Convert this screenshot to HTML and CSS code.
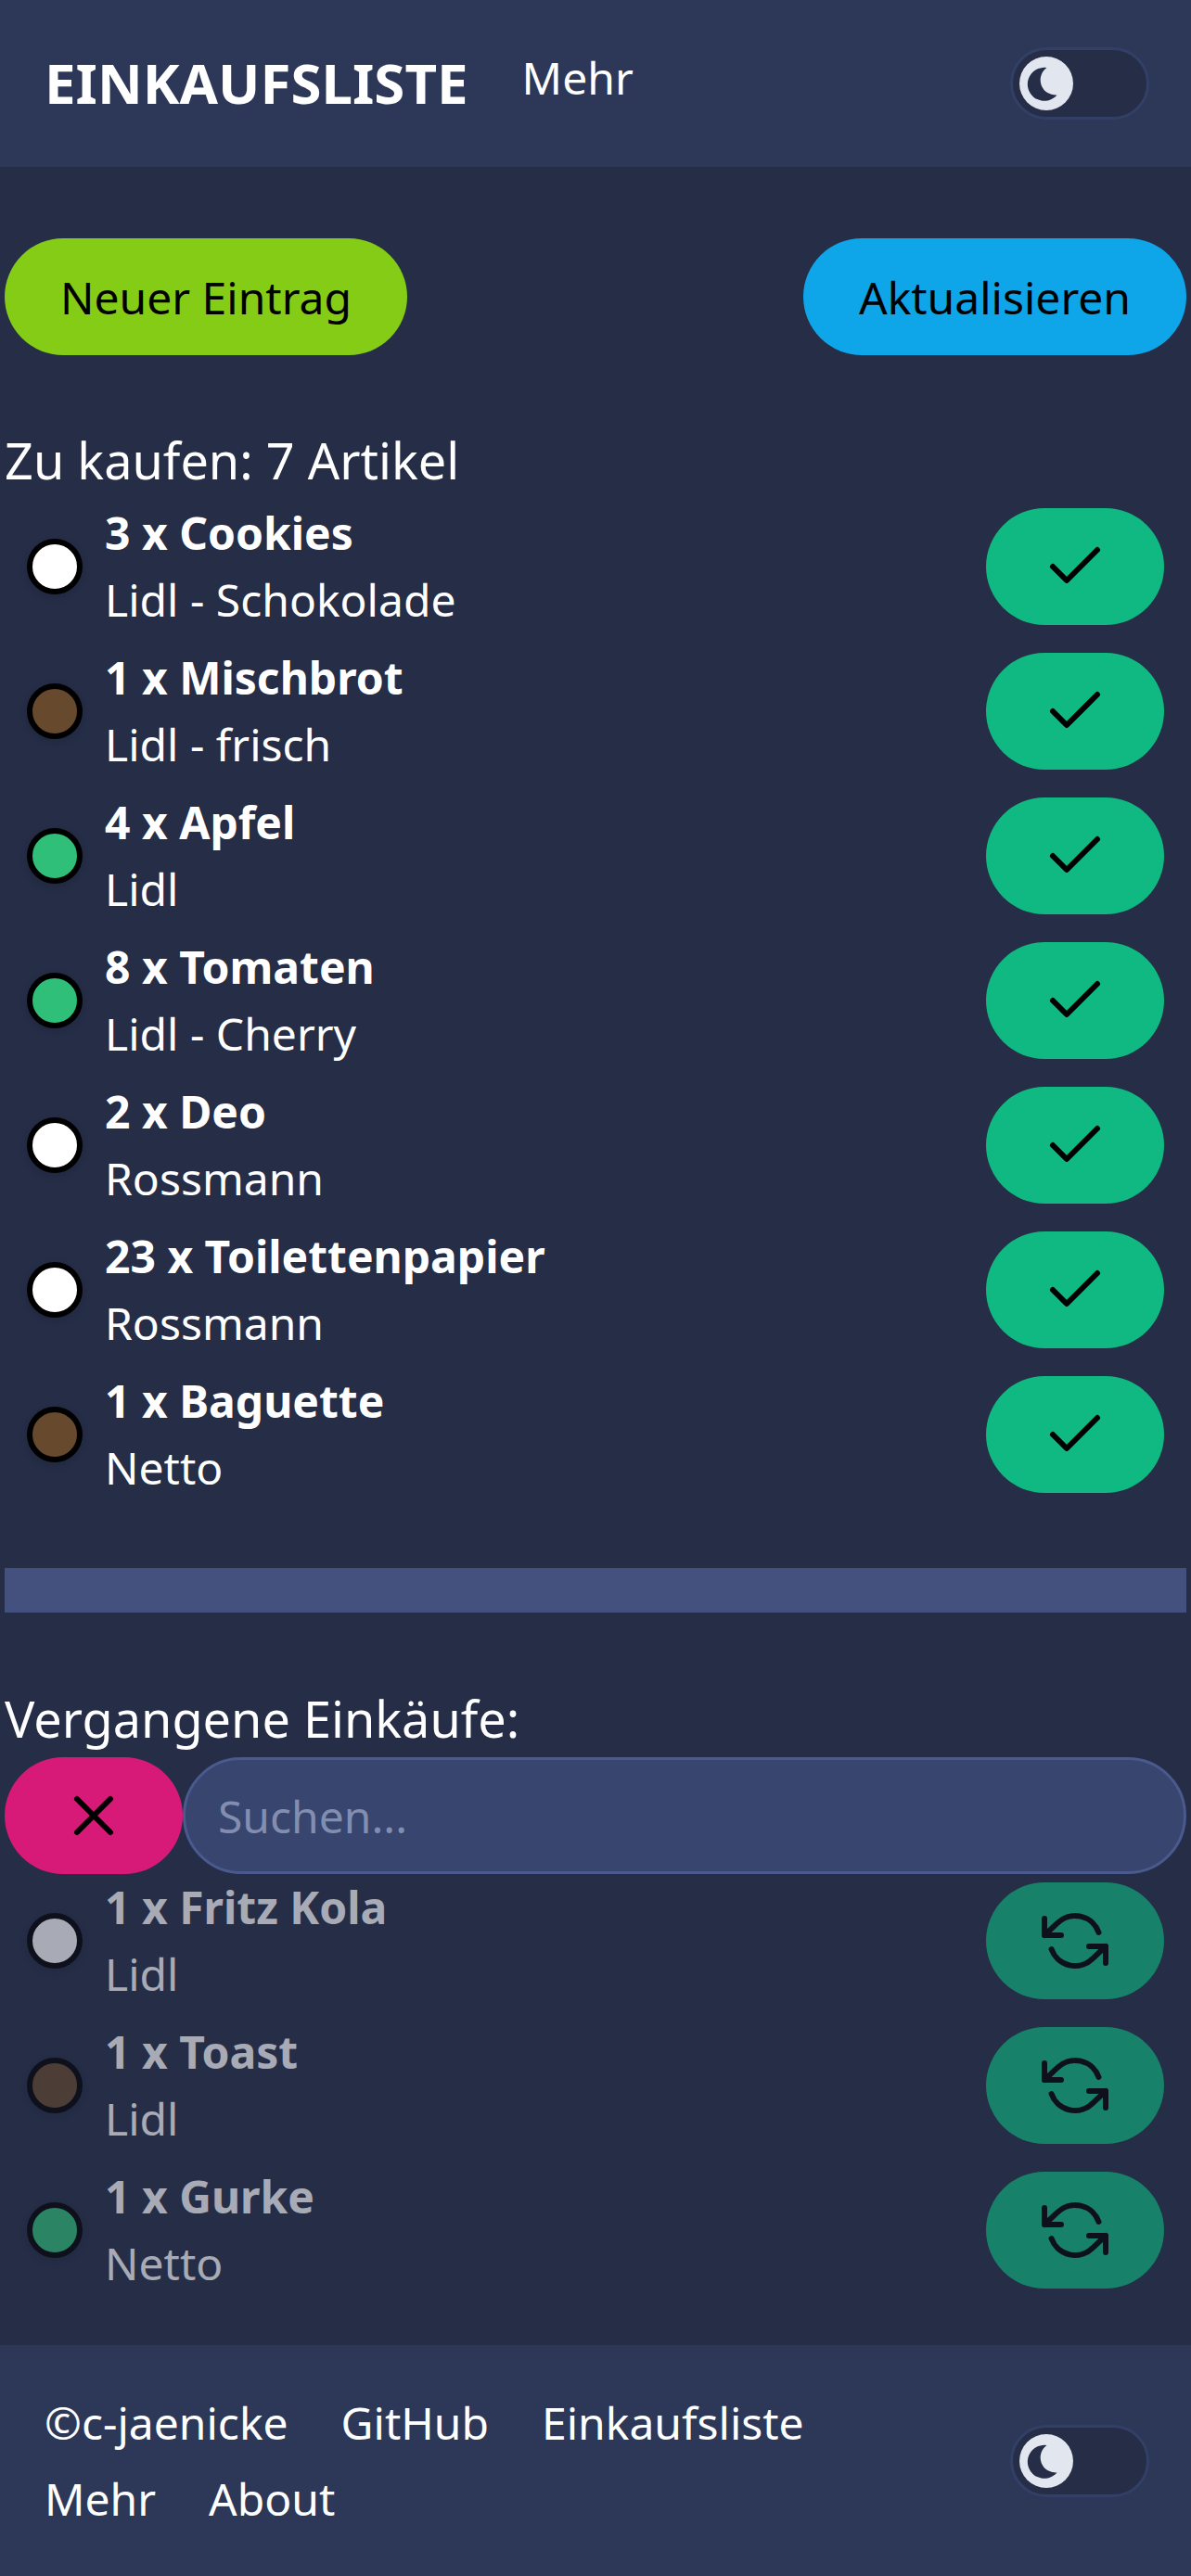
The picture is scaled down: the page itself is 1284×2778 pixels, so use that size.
FILE: index.html
```html
<!DOCTYPE html>
<html lang="de">
	<head>
		<title>Einkaufsliste</title>
		<link rel="stylesheet" href="styles.css">
	</head>
	<body>
		<header class="navbar">
			<a class="brand" href="#">EINKAUFSLISTE</a>
			<a class="nav-link" href="#">Mehr</a>
			<div class="toggle">
				<div class="knob">
					<svg viewBox="0 0 58 58"><path d="M29.5 12A18 18 0 1 0 40.5 41.5A16.3 16.3 0 0 1 29.5 12Z"/></svg>
				</div>
			</div>
		</header>
		<main class="content">
			<div class="actions">
				<button class="pill new">Neuer Eintrag</button>
				<button class="pill refresh">Aktualisieren</button>
			</div>
			<h2 class="heading open-heading">Zu kaufen: 7 Artikel</h2>
			<ul class="items">
				<li class="item">
					<span class="dot white"></span>
					<div class="text"><b>3 x Cookies</b><span>Lidl - Schokolade</span></div>
					<button class="pill icon-btn"><svg viewBox="0 0 24 24"><polyline points="20 6 9 17 4 12"/></svg></button>
				</li>
				<li class="item">
					<span class="dot brown"></span>
					<div class="text"><b>1 x Mischbrot</b><span>Lidl - frisch</span></div>
					<button class="pill icon-btn"><svg viewBox="0 0 24 24"><polyline points="20 6 9 17 4 12"/></svg></button>
				</li>
				<li class="item">
					<span class="dot green"></span>
					<div class="text"><b>4 x Apfel</b><span>Lidl</span></div>
					<button class="pill icon-btn"><svg viewBox="0 0 24 24"><polyline points="20 6 9 17 4 12"/></svg></button>
				</li>
				<li class="item">
					<span class="dot green"></span>
					<div class="text"><b>8 x Tomaten</b><span>Lidl - Cherry</span></div>
					<button class="pill icon-btn"><svg viewBox="0 0 24 24"><polyline points="20 6 9 17 4 12"/></svg></button>
				</li>
				<li class="item">
					<span class="dot white"></span>
					<div class="text"><b>2 x Deo</b><span>Rossmann</span></div>
					<button class="pill icon-btn"><svg viewBox="0 0 24 24"><polyline points="20 6 9 17 4 12"/></svg></button>
				</li>
				<li class="item">
					<span class="dot white"></span>
					<div class="text"><b>23 x Toilettenpapier</b><span>Rossmann</span></div>
					<button class="pill icon-btn"><svg viewBox="0 0 24 24"><polyline points="20 6 9 17 4 12"/></svg></button>
				</li>
				<li class="item">
					<span class="dot brown"></span>
					<div class="text"><b>1 x Baguette</b><span>Netto</span></div>
					<button class="pill icon-btn"><svg viewBox="0 0 24 24"><polyline points="20 6 9 17 4 12"/></svg></button>
				</li>
			</ul>
			<div class="divider"></div>
			<h2 class="heading">Vergangene Einkäufe:</h2>
			<div class="search">
				<button class="pill clear"><svg viewBox="0 0 24 24"><line x1="18" y1="6" x2="6" y2="18"/><line x1="6" y1="6" x2="18" y2="18"/></svg></button>
				<input class="search-input" type="text" placeholder="Suchen...">
			</div>
			<ul class="items past">
				<li class="item">
					<span class="dot white"></span>
					<div class="text"><b>1 x Fritz Kola</b><span>Lidl</span></div>
					<button class="pill icon-btn"><svg viewBox="0 0 24 24"><polyline points="1 4 1 10 7 10"/><polyline points="23 20 23 14 17 14"/><path d="M20.49 9A9 9 0 0 0 5.64 5.64L1 10m22 4l-4.64 4.36A9 9 0 0 1 3.51 15"/></svg></button>
				</li>
				<li class="item">
					<span class="dot brown"></span>
					<div class="text"><b>1 x Toast</b><span>Lidl</span></div>
					<button class="pill icon-btn"><svg viewBox="0 0 24 24"><polyline points="1 4 1 10 7 10"/><polyline points="23 20 23 14 17 14"/><path d="M20.49 9A9 9 0 0 0 5.64 5.64L1 10m22 4l-4.64 4.36A9 9 0 0 1 3.51 15"/></svg></button>
				</li>
				<li class="item">
					<span class="dot green"></span>
					<div class="text"><b>1 x Gurke</b><span>Netto</span></div>
					<button class="pill icon-btn"><svg viewBox="0 0 24 24"><polyline points="1 4 1 10 7 10"/><polyline points="23 20 23 14 17 14"/><path d="M20.49 9A9 9 0 0 0 5.64 5.64L1 10m22 4l-4.64 4.36A9 9 0 0 1 3.51 15"/></svg></button>
				</li>
			</ul>
		</main>
		<footer class="footer">
			<nav class="footer-links">
				<a href="#">©c-jaenicke</a>
				<a href="#">GitHub</a>
				<a href="#">Einkaufsliste</a>
				<a href="#">Mehr</a>
				<a href="#">About</a>
			</nav>
			<div class="toggle">
				<div class="knob">
					<svg viewBox="0 0 58 58"><path d="M29.5 12A18 18 0 1 0 40.5 41.5A16.3 16.3 0 0 1 29.5 12Z"/></svg>
				</div>
			</div>
		</footer>
	</body>
</html>
```

FILE: styles.css
```css
body {
	margin: 0;
	background-color: #252d47;
	color: white;
	font-family: "Noto Sans", sans-serif;
	font-size: 48px;
	line-height: 72px;
}
a {
	color: white;
	text-decoration: none;
}
ul {
	list-style: none;
	margin: 0;
	padding: 0;
}
svg {
	display: block;
}

/* top bar */
.navbar {
	display: flex;
	align-items: center;
	height: 180px;
	padding: 0 45px 0 48px;
	box-sizing: border-box;
	background-color: #2d3858;
}
.brand {
	font-size: 60px;
	line-height: 90px;
	font-weight: 700;
	margin-right: 58px;
	margin-bottom: 2px;
}
.nav-link {
	margin-bottom: 12px;
}
.toggle {
	display: flex;
	align-items: center;
	width: 150px;
	height: 78px;
	margin-left: auto;
	padding-left: 7px;
	box-sizing: border-box;
	background-color: #252d47;
	border: 3px solid #323f66;
	border-radius: 39px;
	flex-shrink: 0;
}
.knob {
	width: 58px;
	height: 58px;
	border-radius: 50%;
	background-color: #e2e6ef;
}
.knob path {
	fill: #252d47;
}

/* main part */
.content {
	padding: 77px 5px 0;
}
.actions {
	display: flex;
	justify-content: space-between;
	margin-bottom: 73px;
}
.pill {
	height: 126px;
	padding: 0 60px;
	border: none;
	border-radius: 63px;
	color: black;
	font-family: inherit;
	font-size: 48px;
}
.new {
	background-color: #84cc16;
}
.refresh {
	background-color: #0ea5e9;
}
.heading {
	margin: 0;
	font-size: 54px;
	line-height: 81px;
	font-weight: 400;
}
.open-heading {
	margin-bottom: 2px;
}
.items {
	display: flex;
	flex-direction: column;
	gap: 12px;
}
.item {
	display: flex;
	align-items: center;
	height: 144px;
}
.dot {
	width: 60px;
	height: 60px;
	margin: 0 24px;
	box-sizing: border-box;
	border: 6px solid black;
	border-radius: 50%;
	box-shadow: 0 3px 9px rgba(0, 0, 0, 0.1);
	flex-shrink: 0;
}
.white {
	background-color: white;
}
.brown {
	background-color: #674a2e;
}
.green {
	background-color: #2fbf78;
}
.text {
	display: flex;
	flex-direction: column;
}
.icon-btn {
	display: flex;
	align-items: center;
	justify-content: center;
	width: 192px;
	margin-left: auto;
	margin-right: 24px;
	padding: 0;
	background-color: #10b981;
}
.pill svg {
	width: 72px;
	height: 72px;
	fill: none;
	stroke: black;
	stroke-width: 2;
	stroke-linecap: round;
	stroke-linejoin: round;
}
.divider {
	height: 48px;
	margin: 72px 0 74px;
	background-color: #44517f;
}
.search {
	display: flex;
	margin-top: 1px;
}
.clear {
	display: flex;
	align-items: center;
	justify-content: center;
	width: 192px;
	padding: 0;
	background-color: #d71a78;
	flex-shrink: 0;
}
.search-input {
	flex: 1;
	min-width: 0;
	height: 126px;
	padding: 0 35px;
	box-sizing: border-box;
	background-color: #38456e;
	border: 3px solid #4a5a8f;
	border-radius: 63px;
	color: white;
	font-family: inherit;
	font-size: 48px;
}
.search-input::placeholder {
	color: #828eb1;
	opacity: 1;
}
.past .item {
	opacity: 0.6;
}

/* bottom bar */
.footer {
	display: flex;
	align-items: center;
	margin-top: 52px;
	padding: 48px 45px 47px 48px;
	background-color: #2d3858;
}
.footer-links {
	display: flex;
	flex-wrap: wrap;
	gap: 10px 57px;
	width: 900px;
}
```
